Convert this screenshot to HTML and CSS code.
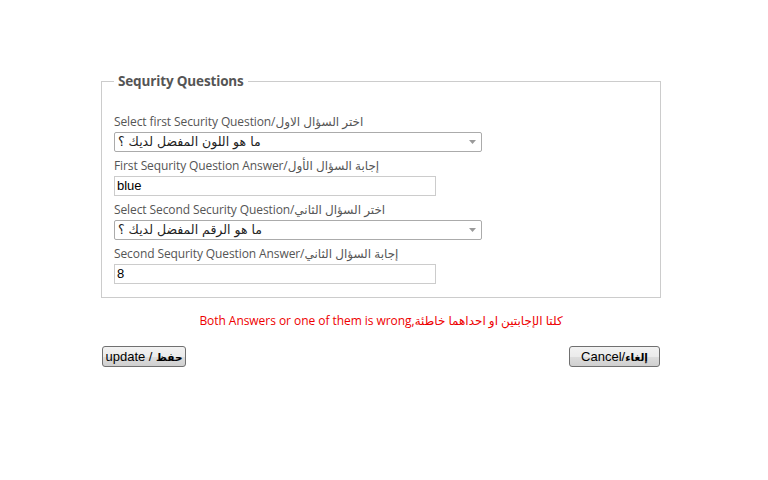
FILE: index.html
```html
<!DOCTYPE html>
<html>
<head>
<meta charset="utf-8">
<link rel="stylesheet" href="styles.css">
</head>
<body>
<div class="page">
  <fieldset class="box">
    <legend class="legend">Sequrity Questions</legend>
    <div class="row">
      <div class="label">Select first Security Question/اختر السؤال الاول</div>
      <div class="select"><span class="sel-text" dir="rtl">ما هو اللون المفضل لديك ؟</span><svg class="arrow" width="7" height="4" viewBox="0 0 7 4"><path d="M0 0H7L3.5 4Z" fill="#9a9a9a"/></svg></div>
    </div>
    <div class="row">
      <div class="label">First Sequrity Question Answer/إجابة السؤال الأول</div>
      <div class="input">blue</div>
    </div>
    <div class="row">
      <div class="label">Select Second Security Question/اختر السؤال الثاني</div>
      <div class="select"><span class="sel-text" dir="rtl">ما هو الرقم المفضل لديك ؟</span><svg class="arrow" width="7" height="4" viewBox="0 0 7 4"><path d="M0 0H7L3.5 4Z" fill="#9a9a9a"/></svg></div>
    </div>
    <div class="row last">
      <div class="label">Second Sequrity Question Answer/إجابة السؤال الثاني</div>
      <div class="input">8</div>
    </div>
  </fieldset>
  <div class="error">Both Answers or one of them is wrong,كلتا الإجابتين او احداهما خاطئة</div>
  <div class="actions">
    <button class="btn btn-update">update / <b>حفظ</b></button>
    <button class="btn btn-cancel">Cancel/<b>إلغاء</b></button>
  </div>
</div>
</body>
</html>
```
FILE: styles.css
```css
html, body {
  margin: 0;
  padding: 0;
  background: #fff;
}
body {
  font-family: "Open Sans", "DejaVu Sans", sans-serif;
}
.page {
  width: 560px;
  margin-left: 101px;
  padding-top: 73px;
}
.box {
  margin: 0;
  border: 1px solid #cccccc;
  padding: 25px 12px 13px 12px;
  min-width: 0;
}
.legend {
  padding: 0 4px;
  font-size: 13.5px;
  font-weight: bold;
  line-height: 16px;
  color: #555555;
  letter-spacing: -0.15px;
}
.row {
  display: flex;
  flex-direction: column;
  align-items: flex-start;
  margin-bottom: 6px;
}
.row.last {
  margin-bottom: 0;
}
.label {
  font-size: 12px;
  line-height: 16px;
  color: #555555;
  margin-bottom: 2px;
  letter-spacing: -0.1px;
}
.select {
  box-sizing: border-box;
  width: 368px;
  height: 20px;
  border: 1px solid #ababab;
  border-radius: 2px;
  display: flex;
  align-items: center;
  justify-content: space-between;
  padding: 0 5px 0 3px;
  background: #fff;
}
.sel-text {
  font-family: "DejaVu Sans", sans-serif;
  font-size: 12.5px;
  color: #222;
  line-height: 16px;
}
.arrow {
  display: block;
}
.input {
  box-sizing: border-box;
  width: 322px;
  height: 20px;
  border: 1px solid #cccccc;
  padding: 0 2px;
  font-family: "Liberation Sans", Arial, sans-serif;
  font-size: 13px;
  line-height: 18px;
  color: #000;
}
.error {
  margin-top: 15px;
  text-align: center;
  font-size: 12px;
  line-height: 16px;
  color: #ee0000;
  letter-spacing: -0.05px;
}
.actions {
  margin-top: 17px;
  display: flex;
  justify-content: space-between;
  padding: 0 1px;
}
.btn {
  box-sizing: border-box;
  height: 21px;
  padding: 0;
  white-space: nowrap;
  border: 1px solid #707070;
  border-radius: 3px;
  background: linear-gradient(#f2f2f2 0%, #ebebeb 50%, #dddddd 51%, #cfcfcf 100%);
  font-family: "Liberation Sans", Arial, "DejaVu Sans", sans-serif;
  font-size: 13px;
  color: #000;
  line-height: 17px;
}
.btn b {
  font-family: "DejaVu Sans", sans-serif;
  font-size: 10.5px;
}
.btn-update {
  width: 84px;
}
.btn-cancel {
  width: 91px;
}
```
